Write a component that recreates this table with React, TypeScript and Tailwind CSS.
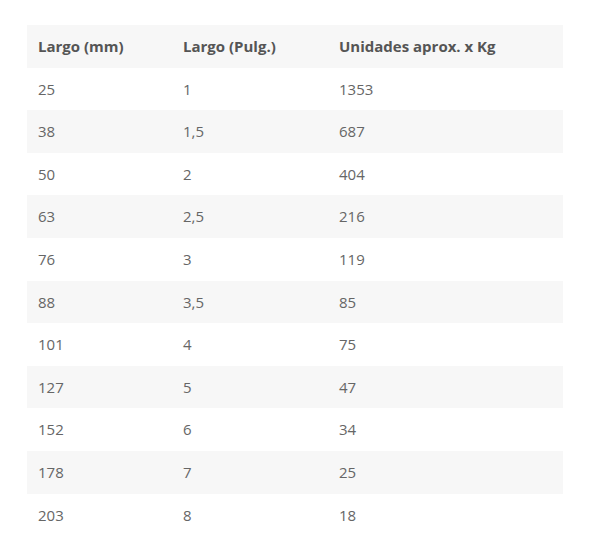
import React from 'react';

const rows: [string, string, string][] = [
    ['25', '1', '1353'],
    ['38', '1,5', '687'],
    ['50', '2', '404'],
    ['63', '2,5', '216'],
    ['76', '3', '119'],
    ['88', '3,5', '85'],
    ['101', '4', '75'],
    ['127', '5', '47'],
    ['152', '6', '34'],
    ['178', '7', '25'],
    ['203', '8', '18'],
];

const App = () => {
    return (
        <div className="w-[590px] h-[551px] bg-white pt-[25px] pl-[27px]" style={{ fontFamily: '"Open Sans", sans-serif' }}>
            <table className="w-[536px] border-collapse text-[15px] table-fixed">
                <colgroup>
                    <col className="w-[146px]" />
                    <col className="w-[156px]" />
                    <col className="w-[234px]" />
                </colgroup>
                <thead>
                    <tr className="h-[42.6px] bg-[#f7f7f7]">
                        <th className="text-left font-bold text-[#555] pl-[11px]">Largo (mm)</th>
                        <th className="text-left font-bold text-[#555] pl-[10px]">Largo (Pulg.)</th>
                        <th className="text-left font-bold text-[#555] pl-[10px]">Unidades aprox. x Kg</th>
                    </tr>
                </thead>
                <tbody>
                    {rows.map((r, i) => (
                        <tr key={r[0]} className={`h-[42.6px] ${i % 2 === 1 ? 'bg-[#f7f7f7]' : 'bg-white'}`}>
                            <td className="text-[#666] pl-[11px]">{r[0]}</td>
                            <td className="text-[#666] pl-[10px]">{r[1]}</td>
                            <td className="text-[#666] pl-[10px]">{r[2]}</td>
                        </tr>
                    ))}
                </tbody>
            </table>
        </div>
    );
};

export default App;
